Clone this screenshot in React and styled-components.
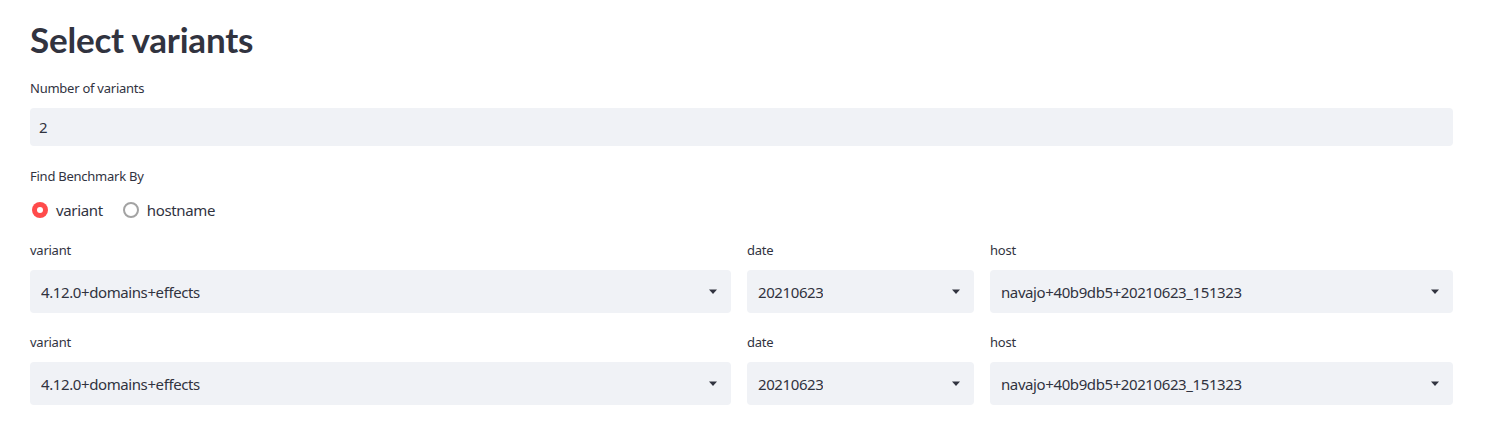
import React, { useState } from "react";
import styled, { createGlobalStyle } from "styled-components";

const GlobalStyle = createGlobalStyle`
  body {
    margin: 0;
    background: #ffffff;
    font-family: "Source Sans Pro", "Noto Sans", sans-serif;
    color: #31333f;
  }
`;

const Page = styled.div`
  padding: 14px 38px 0 30px;
`;

const Title = styled.h1`
  margin: 0 0 14px;
  font-family: "Source Sans Pro", Lato, sans-serif;
  font-size: 35px;
  line-height: 50px;
  font-weight: 700;
  color: #31333f;
  letter-spacing: -0.2px;
`;

const Field = styled.div`
  display: flex;
  flex-direction: column;
  margin-bottom: ${(p) => p.$gap || 0}px;
  min-width: 0;
`;

const Label = styled.label`
  font-size: 13px;
  line-height: 20px;
  height: 20px;
  letter-spacing: -0.25px;
  margin-bottom: ${(p) => p.$space || 10}px;
  color: #31333f;
`;

const TextInput = styled.input`
  box-sizing: border-box;
  height: 38px;
  width: 100%;
  border: none;
  border-radius: 4px;
  background: #f0f2f6;
  padding: 0 9px;
  font-family: inherit;
  font-size: 15px;
  color: #31333f;
  outline: none;
`;

const RadioGroup = styled.div`
  display: flex;
  align-items: center;
  gap: 18px;
  height: 24px;
`;

const RadioOption = styled.label`
  display: flex;
  align-items: center;
  gap: 8px;
  font-size: 15px;
  letter-spacing: -0.35px;
  color: #31333f;
  cursor: pointer;
`;

const RadioDot = styled.span`
  box-sizing: border-box;
  width: 16px;
  height: 16px;
  margin-left: 2px;
  border-radius: 50%;
  display: flex;
  align-items: center;
  justify-content: center;
  background: ${(p) => (p.$checked ? "#ff4b4b" : "#ffffff")};
  border: ${(p) => (p.$checked ? "none" : "2px solid #a3a3a3")};

  &::after {
    content: "";
    width: 6px;
    height: 6px;
    border-radius: 50%;
    background: #ffffff;
    display: ${(p) => (p.$checked ? "block" : "none")};
  }
`;

const Row = styled.div`
  display: grid;
  grid-template-columns: 701fr 227fr 463fr;
  column-gap: 16px;
  margin-bottom: ${(p) => p.$gap || 0}px;
`;

const Select = styled.div`
  box-sizing: border-box;
  height: 43px;
  border-radius: 4px;
  background: #f0f2f6;
  display: flex;
  align-items: center;
  justify-content: space-between;
  padding: 0 13px 0 11px;
  font-size: 15px;
  letter-spacing: -0.4px;
  color: #31333f;
  cursor: pointer;
`;

const Value = styled.span`
  white-space: nowrap;
  overflow: hidden;
  text-overflow: ellipsis;
`;

const Caret = () => (
  <svg width="10" height="6" viewBox="0 0 10 6">
    <path d="M1 0.5h8L5 5z" fill="#31333f" />
  </svg>
);

const SelectBox = ({ label, value }) => (
  <Field>
    <Label>{label}</Label>
    <Select>
      <Value>{value}</Value>
      <Caret />
    </Select>
  </Field>
);

const rows = [
  { variant: "4.12.0+domains+effects", date: "20210623", host: "navajo+40b9db5+20210623_151323" },
  { variant: "4.12.0+domains+effects", date: "20210623", host: "navajo+40b9db5+20210623_151323" },
];

export default function App() {
  const [mode, setMode] = useState("variant");

  return (
    <Page>
      <GlobalStyle />
      <Title>Select variants</Title>
      <Field $gap={20}>
        <Label>Number of variants</Label>
        <TextInput defaultValue="2" />
      </Field>
      <Field $gap={18}>
        <Label $space={12}>Find Benchmark By</Label>
        <RadioGroup>
          {["variant", "hostname"].map((opt) => (
            <RadioOption key={opt} onClick={() => setMode(opt)}>
              <RadioDot $checked={mode === opt} />
              {opt}
            </RadioOption>
          ))}
        </RadioGroup>
      </Field>
      {rows.map((r, i) => (
        <Row key={i} $gap={19}>
          <SelectBox label="variant" value={r.variant} />
          <SelectBox label="date" value={r.date} />
          <SelectBox label="host" value={r.host} />
        </Row>
      ))}
    </Page>
  );
}
